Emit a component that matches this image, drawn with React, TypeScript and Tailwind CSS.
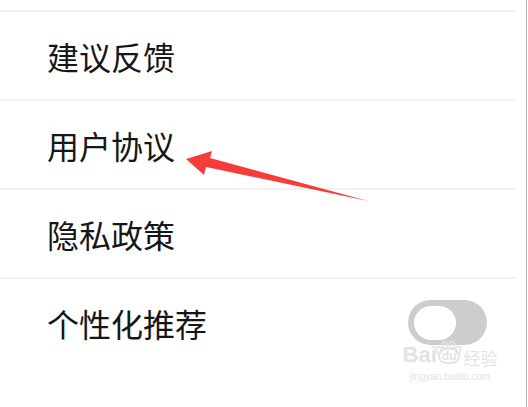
import React from "react";

const rows = ["建议反馈", "用户协议", "隐私政策"];

export default function App() {
  return (
    <div
      className="relative w-[528px] h-[407px] overflow-hidden bg-white"
      style={{ fontFamily: '"Noto Sans CJK SC", "Noto Sans", sans-serif' }}
    >
      <div className="flex h-full">
        <div className="flex flex-col w-[526px]">
          <div className="h-[10px]" />
          {rows.map((r) => (
            <div key={r} className="flex flex-col">
              <div className="h-[2px] w-[515px] bg-[#f1f1f1]" />
              <div className="h-[87px] flex items-center pl-[47px] pt-[1px] text-[32px] text-[#161616] leading-none">
                {r}
              </div>
            </div>
          ))}
          <div className="h-[2px] w-[515px] bg-[#f1f1f1]" />
          <div className="h-[87px] flex items-center justify-between pl-[47px] pr-[39px]">
            <span className="text-[32px] text-[#161616] leading-none">个性化推荐</span>
            <div className="w-[79px] h-[45px] rounded-full bg-[#cdcdcd] flex items-center pl-[6px]">
              <div className="w-[42px] h-[34px] rounded-full bg-white" />
            </div>
          </div>
        </div>
        <div className="w-[1px] h-full bg-[#b0b0b0]" />
        <div className="w-[1px] h-full bg-white" />
      </div>

      <svg className="absolute left-0 top-0" width="528" height="407" viewBox="0 0 528 407">
        <polygon
          points="186,159 212,151 210,158 368,201 206,167 204,175"
          fill="#f73c3c"
        />
        <g fill="none" stroke="#e3e3e3" strokeWidth="1.5">
          <ellipse cx="439" cy="350" rx="2.5" ry="3.5" />
          <ellipse cx="445" cy="345" rx="2.5" ry="3.5" />
          <ellipse cx="452" cy="345" rx="2.5" ry="3.5" />
          <ellipse cx="458" cy="350" rx="2.5" ry="3.5" />
        </g>
      </svg>

      <div className="absolute left-[402px] top-[344px] w-[96px] flex flex-col items-center text-[#e3e3e3] leading-none whitespace-nowrap">
        <div className="flex items-end gap-[1px] whitespace-nowrap">
          <span className="text-[22px] font-bold" style={{ fontFamily: '"Liberation Sans", sans-serif' }}>Bai</span>
          <span className="text-[12px] font-bold border-[2px] border-[#e3e3e3] rounded-full px-[2px] mb-[2px]" style={{ fontFamily: '"Liberation Sans", sans-serif' }}>du</span>
          <span className="text-[17px] ml-[2px] whitespace-nowrap">经验</span>
        </div>
        <span className="text-[10px] mt-[6px]" style={{ fontFamily: '"Liberation Sans", sans-serif' }}>jingyan.baidu.com</span>
      </div>
    </div>
  );
}
